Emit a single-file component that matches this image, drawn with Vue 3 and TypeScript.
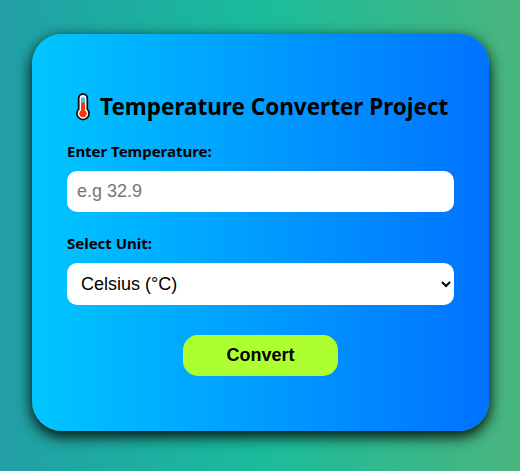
<script setup lang="ts">
import { ref } from 'vue'

const temperature = ref<string>('')
const unit = ref<string>('celsius')
</script>

<template>
  <main class="page">
    <section class="card">
      <h2 class="title">
        <svg class="thermo" viewBox="0 0 16 28" aria-hidden="true">
          <path d="M3.7 5.3a4.3 4.3 0 0 1 8.6 0v10.8a6.1 6.1 0 1 1-8.6 0z" fill="#fff" stroke="#111" stroke-width="1.8" />
          <path d="M8 4.3v6" stroke="#4cc2e8" stroke-width="4" />
          <path d="M8 9.5v12" stroke="#f03a17" stroke-width="4" />
          <circle cx="8" cy="20.6" r="3.7" fill="#f03a17" />
        </svg>
        <span class="title-text">Temperature Converter Project</span>
      </h2>
      <label class="label" for="temp">Enter Temperature:</label>
      <input id="temp" v-model="temperature" class="field" type="text" placeholder="e.g 32.9" />
      <label class="label second" for="unit">Select Unit:</label>
      <select id="unit" v-model="unit" class="field select">
        <option value="celsius">Celsius (°C)</option>
        <option value="fahrenheit">Fahrenheit (°F)</option>
        <option value="kelvin">Kelvin (K)</option>
      </select>
      <button class="convert" type="button">Convert</button>
    </section>
  </main>
</template>

<style>
body {
  margin: 0;
}
</style>

<style scoped>
.page {
  box-sizing: border-box;
  height: 471px;
  padding: 34px 31px 40px 32px;
  overflow: hidden;
  background: linear-gradient(to right, #219fa5, #1abc9c 50%, #4ab57f);
  font-family: "Noto Sans", "Open Sans", sans-serif;
}
.card {
  box-sizing: border-box;
  height: 397px;
  padding: 55px 35px 0;
  display: flex;
  flex-direction: column;
  border-radius: 30px;
  background: linear-gradient(to right, #00c6ff, #0072ff);
  box-shadow: 0 5px 15px #000;
}
.title {
  margin: 0;
  height: 34px;
  display: flex;
  align-items: center;
  padding-left: 8px;
  gap: 9px;
  font-size: 24px;
  line-height: 34px;
  white-space: nowrap;
}
.title-text {
  transform: scaleX(0.937);
  transform-origin: left center;
}
.thermo {
  width: 16px;
  height: 28px;
  margin-top: 1px;
  flex: none;
}
.label {
  margin-top: 17px;
  height: 22px;
  font-size: 15px;
  font-weight: 700;
  line-height: 22px;
  letter-spacing: -0.02px;
}
.second {
  margin-top: 20px;
}
.field {
  box-sizing: border-box;
  width: 387px;
  height: 41px;
  margin-top: 9px;
  padding: 10px;
  border: none;
  border-radius: 10px;
  background: #fff;
  color: #000;
  font: 18px "Liberation Sans", Arial, sans-serif;
}
.select {
  height: 42px;
}
.convert {
  width: 155px;
  height: 41px;
  margin-top: 30px;
  align-self: center;
  border: none;
  border-radius: 15px;
  background: #adff2f;
  color: #000;
  font: bold 18px "Liberation Sans", Arial, sans-serif;
}
</style>
